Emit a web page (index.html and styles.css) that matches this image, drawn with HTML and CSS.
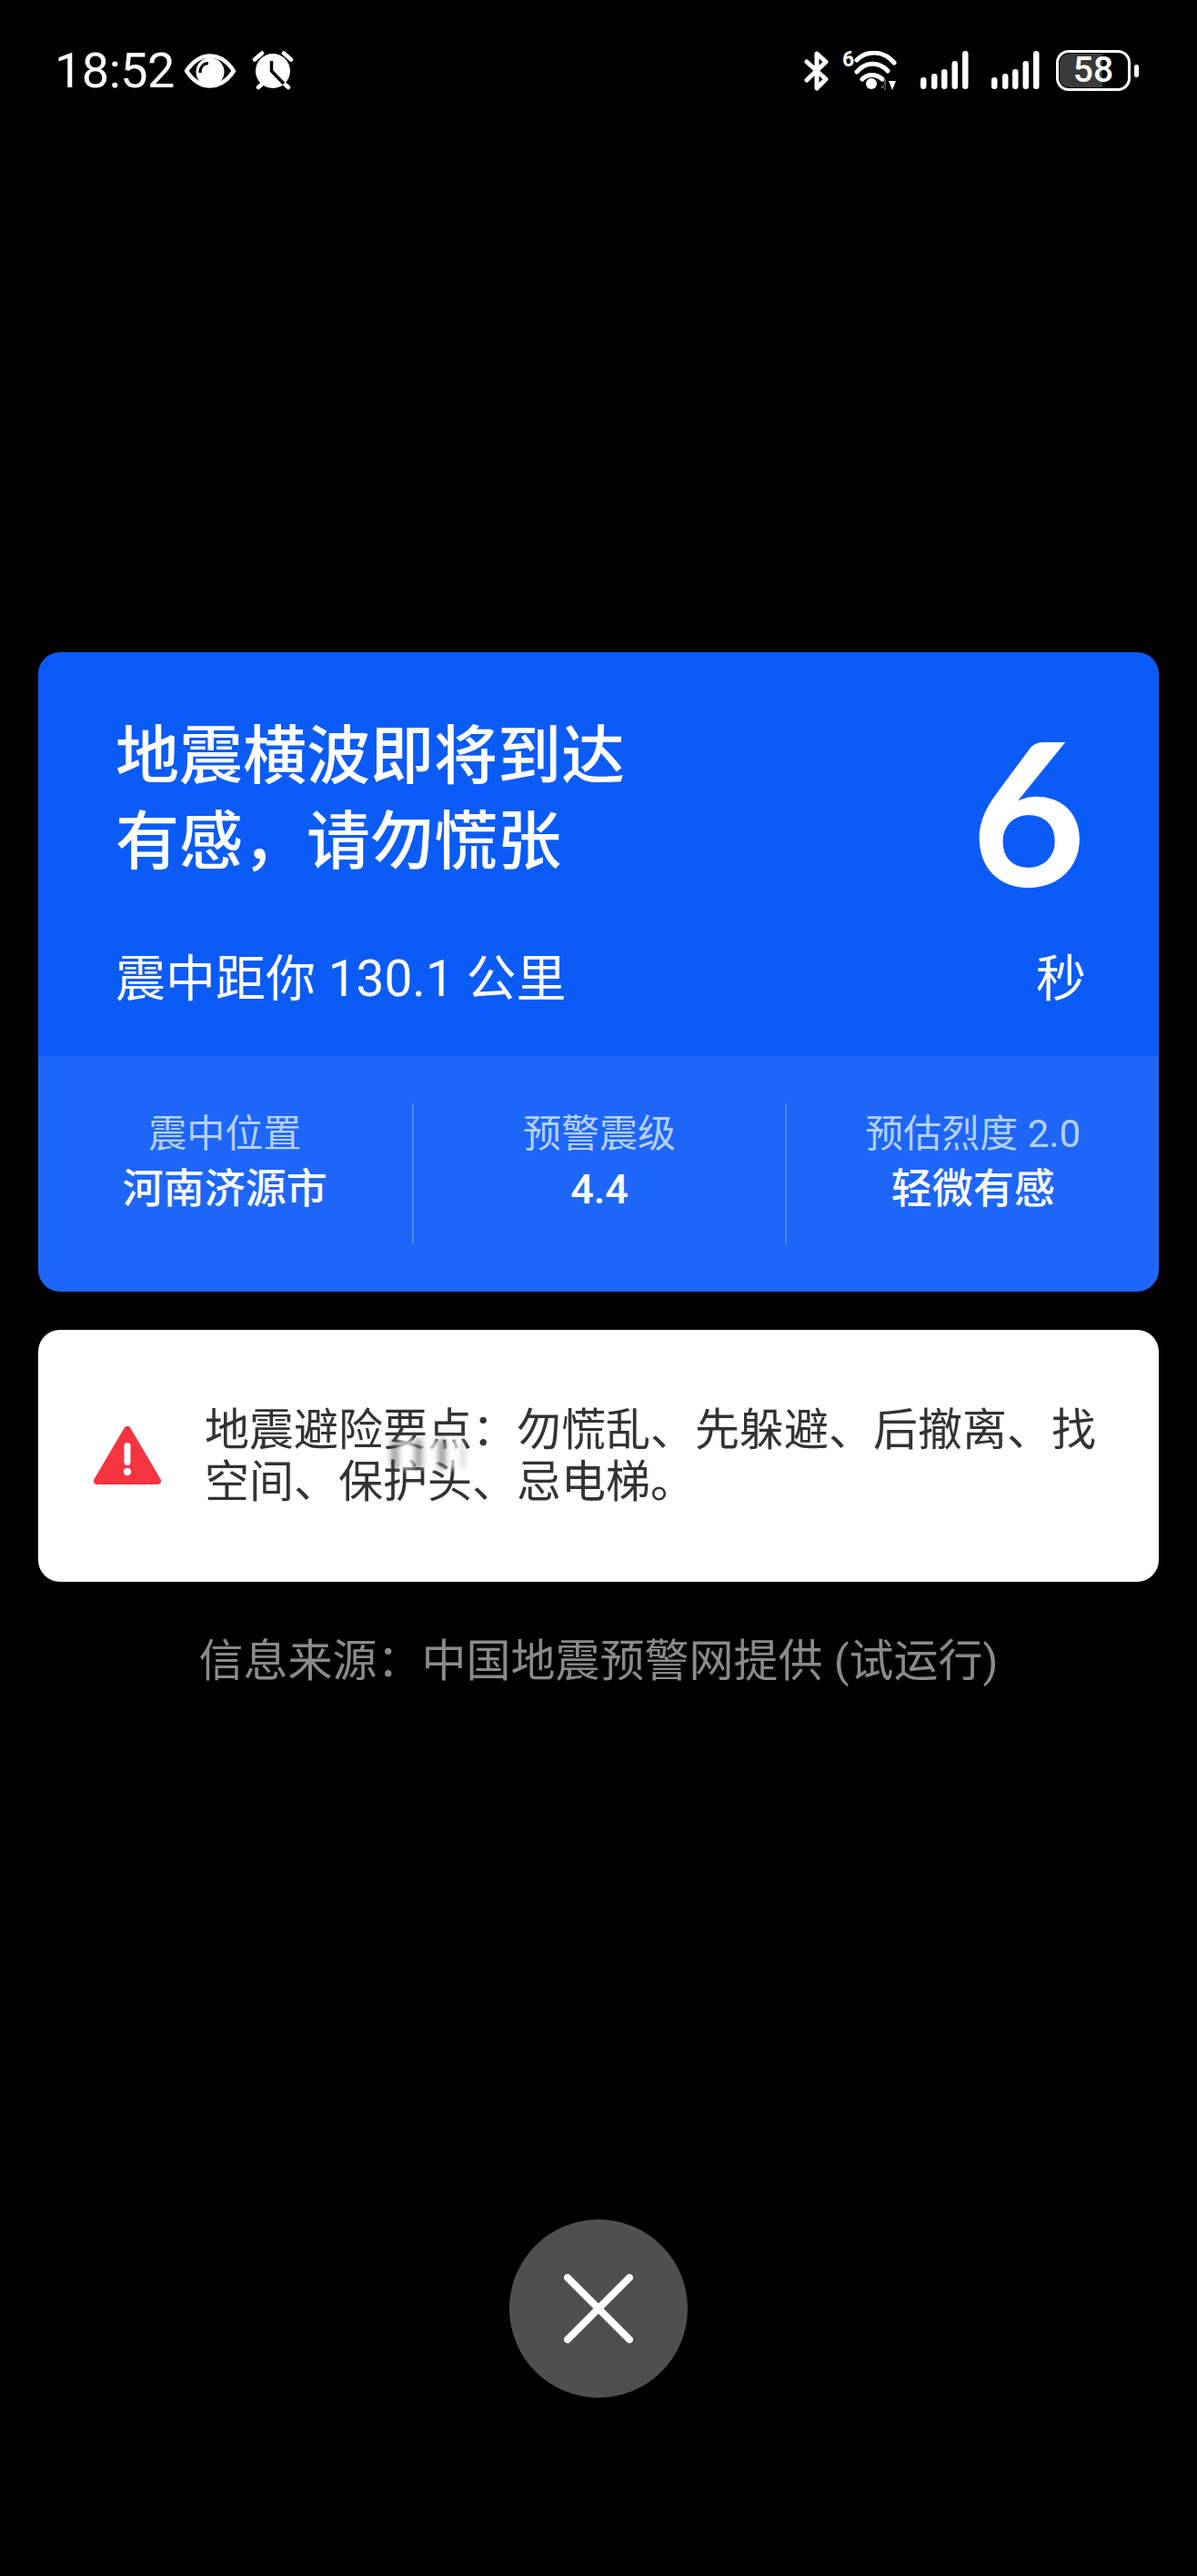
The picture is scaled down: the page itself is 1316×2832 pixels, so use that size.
FILE: index.html
```html
<!DOCTYPE html>
<html lang="zh-CN">
<head>
<meta charset="utf-8">
<title>地震预警</title>
<link rel="stylesheet" href="styles.css">
</head>
<body>
<div class="page">
  <header class="status">
    <div class="status-left">
      <span class="time">18:52</span>
      <svg class="ic-eye" width="58" height="38" viewBox="0 0 58 38">
        <path d="M3 19C11 7 20 2.500 29 2.500S47 7 55 19C47 31 38 35.500 29 35.500S11 31 3 19Z" fill="none" stroke="#fff" stroke-width="4.500" stroke-linejoin="round"/>
        <circle cx="29" cy="20" r="15.500" fill="#fff"/>
        <path d="M18 21C17.500 15 22 10.500 27 10.500" fill="none" stroke="#000" stroke-width="3"/>
      </svg>
      <svg class="ic-alarm" width="46" height="43" viewBox="0 0 46 43">
        <circle cx="23" cy="22" r="19" fill="#fff"/>
        <path d="M3 9.500L11 2.500M35 2.500L43 9.500M7 40L11 36.500M36 36.500L40 40" fill="none" stroke="#fff" stroke-width="4.500" stroke-linecap="round"/>
        <path d="M21.500 11V22L35 36" fill="none" stroke="#000" stroke-width="3.500"/>
      </svg>
    </div>
    <div class="status-right">
      <svg class="ic-bt" width="28" height="44" viewBox="0 0 28 44">
        <path d="M3 12L24 31L14 41V3L24 12L3 32" fill="none" stroke="#fff" stroke-width="5" stroke-linecap="round" stroke-linejoin="round"/>
      </svg>
      <span class="wifi-six">6</span>
      <svg class="ic-wifi" width="48" height="44" viewBox="0 0 48 44">
        <path d="M3 10C14 -1 32 -1 44 13M3 23C12 12 27 11 37 22M9 31C15 25 24 25 31 31" fill="none" stroke="#fff" stroke-width="5" stroke-linecap="round"/>
        <circle cx="19" cy="36" r="6" fill="#fff"/>
        <path d="M32 37L29 41H34V37ZM35 31V43H33V31Z" fill="#555"/>
        <path d="M38 33H46L42 43Z" fill="#fff"/>
      </svg>
      <svg class="ic-signal" width="53" height="43" viewBox="0 0 53 43">
        <rect x="0" y="29" width="6.500" height="13" rx="3.250" fill="#fff"/>
        <rect x="12" y="25" width="6.500" height="17" rx="3.250" fill="#fff"/>
        <rect x="23" y="20" width="6.500" height="22" rx="3.250" fill="#fff"/>
        <rect x="34.500" y="11" width="6.500" height="31" rx="3.250" fill="#fff"/>
        <rect x="46" y="0" width="6.500" height="42" rx="3.250" fill="#fff"/>
      </svg>
      <svg class="ic-signal" width="53" height="43" viewBox="0 0 53 43">
        <rect x="0" y="29" width="6.500" height="13" rx="3.250" fill="#fff"/>
        <rect x="12" y="25" width="6.500" height="17" rx="3.250" fill="#fff"/>
        <rect x="23" y="20" width="6.500" height="22" rx="3.250" fill="#fff"/>
        <rect x="34.500" y="11" width="6.500" height="31" rx="3.250" fill="#fff"/>
        <rect x="46" y="0" width="6.500" height="42" rx="3.250" fill="#fff"/>
      </svg>
      <div class="battery">
        <div class="battery-body">
          <span class="battery-fill"></span>
          <span class="battery-num">58</span>
        </div>
        <span class="battery-nub"></span>
      </div>
    </div>
  </header>

  <main class="content">
    <section class="alert">
      <div class="alert-top">
        <div class="alert-main">
          <h1 class="alert-title">地震横波即将到达<br>有感，请勿慌张</h1>
          <p class="alert-sub">震中距你 130.1 公里</p>
        </div>
        <div class="alert-count">
          <span class="count-num">6</span>
          <span class="count-unit">秒</span>
        </div>
      </div>
      <div class="alert-stats">
        <div class="stat">
          <span class="stat-label">震中位置</span>
          <span class="stat-value">河南济源市</span>
        </div>
        <div class="stat">
          <span class="stat-label">预警震级</span>
          <span class="stat-value">4.4</span>
        </div>
        <div class="stat">
          <span class="stat-label">预估烈度 2.0</span>
          <span class="stat-value">轻微有感</span>
        </div>
      </div>
    </section>

    <section class="tips">
      <svg class="ic-warn" width="74" height="66" viewBox="0 0 74 66">
        <path d="M37 4L70 60H4Z" fill="#f5343f" stroke="#f5343f" stroke-width="8" stroke-linejoin="round"/>
        <rect x="33.500" y="18" width="7" height="25" rx="3.500" fill="#fff"/>
        <circle cx="37" cy="50" r="4.200" fill="#fff"/>
      </svg>
      <p class="tips-text">地震避险要点：勿慌乱、先躲避、后撤离、找空间、保护头、忌电梯。</p>
      <div class="smudge"></div>
    </section>

    <p class="source">信息来源：中国地震预警网提供 (试运行)</p>
  </main>

  <button class="close" type="button" aria-label="关闭">
    <svg width="76" height="76" viewBox="0 0 76 76">
      <path d="M4 4L72 72M72 4L4 72" fill="none" stroke="#fff" stroke-width="8" stroke-linecap="round"/>
    </svg>
  </button>
</div>
</body>
</html>
```

FILE: styles.css
```css
* { box-sizing: border-box; }
html, body { margin: 0; padding: 0; background: #000; }
body {
  font-family: Roboto, "Noto Sans CJK SC", sans-serif;
  color: #fff;
}
p, h1 { margin: 0; }

.page {
  height: 2832px;
  display: flex;
  flex-direction: column;
  align-items: stretch;
}

/* status bar */
.status {
  height: 100px;
  padding: 55px 64px 0 60px;
  display: flex;
  justify-content: space-between;
  align-items: center;
}
.status-left, .status-right { display: flex; align-items: center; height: 45px; }
.time { font-size: 54px; line-height: 45px; letter-spacing: -0.5px; width: 142px; }
.ic-alarm { margin-left: 17px; }
.ic-bt { margin-right: 14px; }
.wifi-six {
  font-size: 23px;
  font-weight: 700;
  line-height: 20px;
  width: 13px;
  align-self: flex-start;
  margin-top: 1px;
}
.ic-wifi { margin-left: 0; }
.ic-signal { margin-left: 25px; }
.battery { display: flex; align-items: center; margin-left: 18px; }
.battery-body {
  position: relative;
  width: 82px;
  height: 45px;
  border: 3px solid #fff;
  border-radius: 14px;
  display: flex;
  align-items: center;
  justify-content: center;
}
.battery-fill {
  position: absolute;
  left: 1px;
  top: 1px;
  bottom: 1px;
  width: 47px;
  background: #3a3a3a;
  border-radius: 10px 0 0 10px;
}
.battery-num { position: relative; font-size: 39px; font-weight: 500; line-height: 39px; }
.battery-nub { width: 5px; height: 14px; border-radius: 3px; background: #fff; margin-left: 4px; }

/* content */
.content { padding: 0 42px; margin-top: 617px; }

.alert { border-radius: 24px; overflow: hidden; }
.alert-top {
  height: 444px;
  background: #0b5bf7;
  padding: 68px 80px 50px 85px;
  display: flex;
  justify-content: space-between;
}
.alert-main, .alert-count { display: flex; flex-direction: column; justify-content: space-between; }
.alert-title { font-size: 70px; line-height: 94px; font-weight: 500; }
.alert-sub { font-size: 55px; line-height: 70px; }
.alert-count { align-items: flex-end; position: relative; }
.count-num { font-family: Lato, sans-serif; font-size: 218px; line-height: 210px; font-weight: 700; }
.count-unit { font-size: 55px; line-height: 70px; }

.alert-stats {
  height: 259px;
  background: #1e66f8;
  padding: 52px 0 53px;
  display: grid;
  grid-template-columns: repeat(3, 1fr);
}
.stat {
  display: flex;
  flex-direction: column;
  align-items: center;
  padding-top: 6px;
  gap: 6px;
  border-left: 2px solid #4d85fa;
}
.stat:first-child { border-left: 0; }
.stat-label { font-size: 42px; line-height: 55px; color: #b5cffb; }
.stat-value { font-size: 45px; line-height: 55px; font-weight: 500; }

.tips {
  position: relative;
  height: 277px;
  margin-top: 42px;
  background: #fff;
  border-radius: 24px;
  padding: 0 68px 0 61px;
  display: flex;
  align-items: center;
  gap: 48px;
}
.ic-warn { flex: none; }
.tips-text { font-size: 49px; line-height: 57px; color: #333; }
.smudge {
  position: absolute;
  left: 388px;
  top: 120px;
  width: 80px;
  height: 33px;
  background: repeating-linear-gradient(90deg, rgba(70,70,70,.55) 0 8px, rgba(255,255,255,.7) 8px 26px);
  filter: blur(3px);
}

.source {
  margin-top: 58px;
  text-align: center;
  font-size: 49px;
  line-height: 60px;
  color: #8a8a8a;
}

.close {
  margin: auto auto 196px;
  width: 196px;
  height: 196px;
  border: 0;
  padding: 0;
  border-radius: 50%;
  background: #4f4f4f;
  display: flex;
  align-items: center;
  justify-content: center;
}
```
